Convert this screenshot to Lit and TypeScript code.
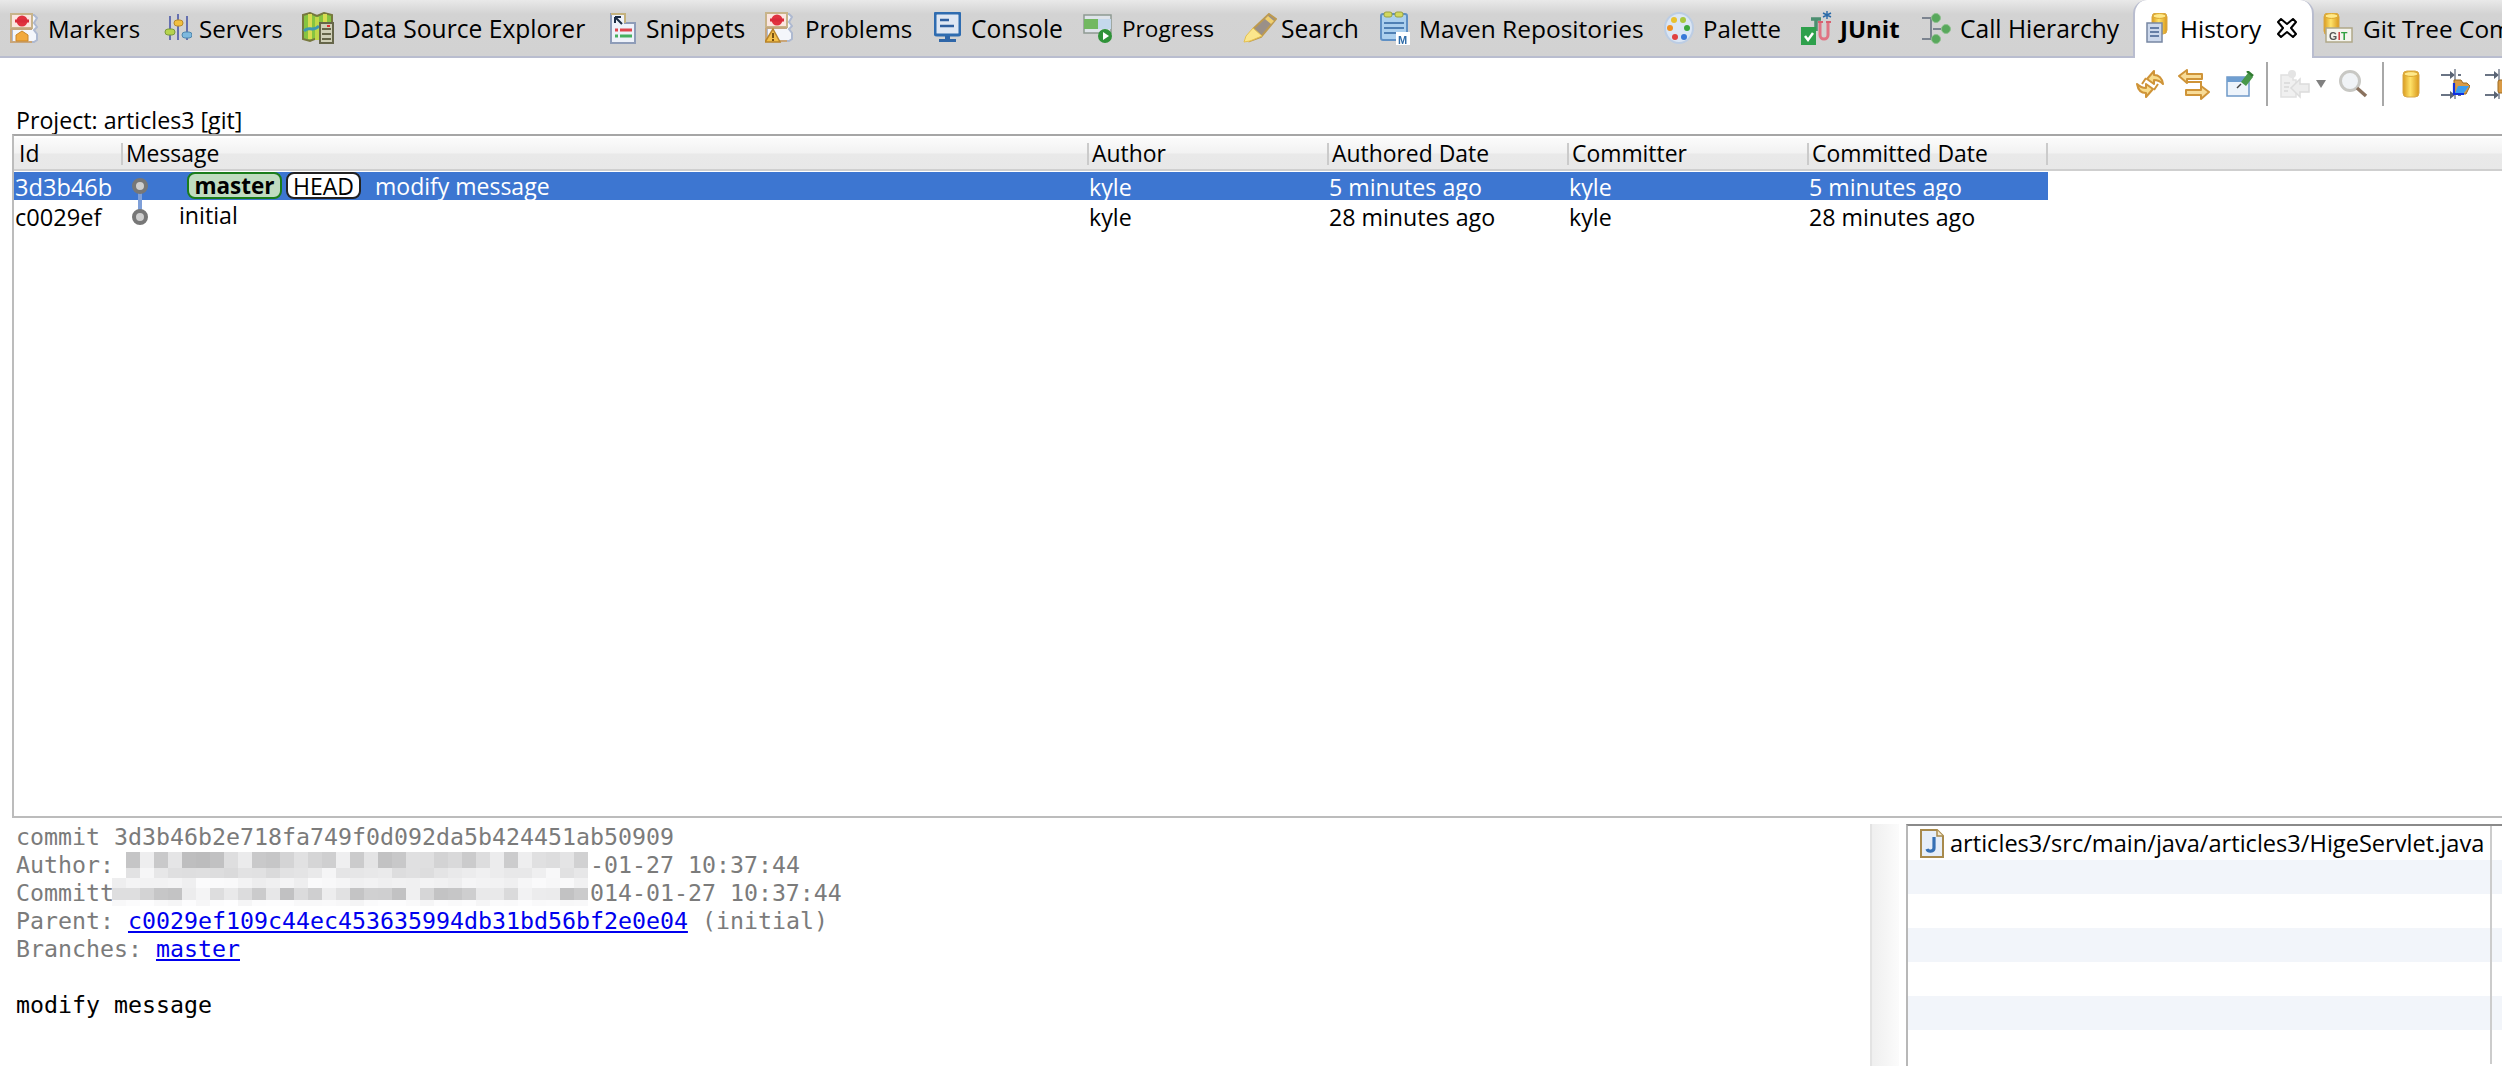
import { LitElement, html, css, svg } from "lit";
import { customElement } from "lit/decorators.js";

const cyl = (x: number, y: number, w: number, h: number) => svg`
  <defs><linearGradient id="cy${x}${y}" x1="0" x2="1" y1="0" y2="0"><stop offset="0" stop-color="#d99b1e"/><stop offset=".45" stop-color="#ffe36a"/><stop offset="1" stop-color="#d9981c"/></linearGradient></defs>
  <rect x=${x} y=${y} width=${w} height=${h} rx="4" fill="url(#cy${x}${y})" stroke="#d8a848" stroke-width="1"/>
  <ellipse cx=${x + w / 2} cy=${y + 3} rx=${w / 2 - 1} ry="2.4" fill="#ffe98a" stroke="#dba62e" stroke-width="1"/>`;

const sheetIcon = svg`
  <path d="M2 2h22l3 3-3 5 3 4-3 3 3 4v6l-3 2H2z" fill="#f4f6fb" stroke="#aeb9d0" stroke-width="2"/>
  <path d="M1 1h21v14H1z" fill="#fbe6e0" stroke="#c8b48a" stroke-width="2"/>
  <path d="M1 16h21" stroke="#c4a67e" stroke-width="2"/>
  <path d="M1 16v13h21" fill="none" stroke="#c9a67a" stroke-width="2"/>`;

const ICONS: Record<string, unknown> = {
  markers: html`<svg width="28" height="30" viewBox="0 0 28 30">${sheetIcon}
    <circle cx="12" cy="8" r="5.5" fill="#e0333f"/><rect x="5" y="6.5" width="14" height="3" fill="#d92b3a"/>
    <path d="M12 18l6 4v6H6v-6z" fill="#f2a93c" stroke="#c9862a"/></svg>`,
  servers: html`<svg width="28" height="30" viewBox="0 0 28 30">
    <path d="M6 3v24M14 1v26M23 3v24" stroke="#6570b0" stroke-width="2"/>
    <rect x="1" y="16" width="10" height="6" rx="3" fill="#b6d44e" stroke="#7a9a3a"/>
    <rect x="10" y="7" width="9" height="6" rx="3" fill="#f2bf3e" stroke="#b98a2a"/>
    <rect x="18" y="19" width="10" height="6" rx="3" fill="#7db8de" stroke="#4f86ad"/></svg>`,
  data: html`<svg width="32" height="32" viewBox="0 0 32 32">
    <path d="M1 3l7-2 7 3 7-3 8 2v24l-8 2-7-3-7 3-7-2z" fill="#86c440" stroke="#77783e" stroke-width="2"/>
    <path d="M8 2v25" stroke="#d8dc50" stroke-width="4"/><path d="M15 5v23" stroke="#c0d848" stroke-width="4"/><path d="M23 2v9" stroke="#d8dc50" stroke-width="4"/>
    <path d="M2 19c5-6 8 2 15-5" stroke="#3f98b0" stroke-width="3" fill="none"/>
    <rect x="18" y="11" width="13" height="20" fill="#d0d0b8" stroke="#66664a" stroke-width="2"/>
    <path d="M20 17h9M20 22h9M20 27h9" stroke="#66664a" stroke-width="2"/><rect x="25" y="13" width="3" height="2" fill="#d33"/></svg>`,
  snippets: html`<svg width="26" height="32" viewBox="0 0 26 32">
    <path d="M1 2h14v9h10v20H1z" fill="#eef2fa" stroke="#8e9cb8" stroke-width="2"/>
    <path d="M1 2h14v9" fill="none" stroke="#c4b27e" stroke-width="2"/>
    <path d="M12 12L5 5M5 5v6M5 5h6" stroke="#1c2d44" stroke-width="2" fill="none"/>
    <path d="M5 18h3M10 18h12" stroke="#e0454c" stroke-width="3"/><path d="M5 24h3M10 24h12" stroke="#46b060" stroke-width="3"/></svg>`,
  problems: html`<svg width="28" height="32" viewBox="0 0 28 32">${sheetIcon}
    <circle cx="12" cy="8" r="5.5" fill="#e0333f"/><rect x="5" y="6.5" width="14" height="3" fill="#d92b3a"/>
    <path d="M8 17l7 13H0z" fill="#f4c04a" stroke="#b8842a" stroke-width="1.5"/><path d="M8 21v5M8 27v2" stroke="#7a5312" stroke-width="2"/></svg>`,
  console: html`<svg width="27" height="32" viewBox="0 0 27 32">
    <rect x="1" y="1" width="25" height="22" rx="2" fill="#dfe7f3" stroke="#2f6cb0" stroke-width="3"/>
    <path d="M6 8h9M6 14h14" stroke="#2f5f9f" stroke-width="2.5"/>
    <path d="M11 24h5v3h-5zM5 27h17v3H5z" fill="#2f66a8"/></svg>`,
  progress: html`<svg width="30" height="32" viewBox="0 0 30 32">
    <rect x="1" y="3" width="27" height="18" fill="#dfe4ea" stroke="#8f9a92" stroke-width="1.5"/>
    <rect x="1" y="7" width="14" height="10" fill="#72b860"/><rect x="15" y="7" width="13" height="10" fill="#c4d8ec"/>
    <circle cx="22" cy="24" r="7" fill="#2f9238"/><path d="M20 20l6 4-6 4z" fill="#fff"/></svg>`,
  search: html`<svg width="35" height="30" viewBox="0 0 35 30">
    <path d="M27 1l7 5-15 18-11 4 3-12z" fill="#9a9088" stroke="#bd9a50" stroke-width="2"/>
    <path d="M26 3l6 5-3 3-6-5z" fill="#f0d070"/>
    <path d="M11 15l9 8-12 5-6 1 2-6z" fill="#fbe68c" stroke="#e4c050"/></svg>`,
  maven: html`<svg width="30" height="34" viewBox="0 0 30 34">
    <rect x="1" y="3" width="26" height="26" rx="2" fill="#acd0ee" stroke="#5f90c4" stroke-width="2"/>
    <rect x="4" y="1" width="8" height="5" rx="2" fill="#d2d860" stroke="#9aa040"/><rect x="15" y="1" width="8" height="5" rx="2" fill="#d2d860" stroke="#9aa040"/>
    <path d="M4 12h20M4 17h20M4 22h16" stroke="#4f80b4" stroke-width="2"/>
    <rect x="16" y="21" width="14" height="13" fill="#fff"/><text x="18" y="32.5" font-family="Liberation Sans, sans-serif" font-weight="700" font-size="11" fill="#2f6ca8">M</text></svg>`,
  palette: html`<svg width="30" height="32" viewBox="0 0 30 32">
    <ellipse cx="15" cy="16" rx="14" ry="15" fill="#dbe6f4" stroke="#bccde4" stroke-width="2"/>
    <circle cx="10" cy="8" r="3" fill="#e8c22e"/><circle cx="19" cy="8" r="3" fill="#a8c840"/>
    <circle cx="6" cy="16" r="3" fill="#f09020"/><circle cx="23" cy="16" r="3" fill="#3ca83c"/>
    <circle cx="11" cy="25" r="3" fill="#e04040"/><circle cx="20" cy="25" r="3" fill="#3878d8"/></svg>`,
  junit: html`<svg width="33" height="36" viewBox="0 0 33 36">
    <path d="M11 9h10M16 9v12" stroke="#4c8f70" stroke-width="3.5"/>
    <path d="M20 13v12a4 4 0 008 0V13" fill="none" stroke="#e07484" stroke-width="3"/><path d="M18 12h5M26 12h5" stroke="#d86070" stroke-width="2"/>
    <path d="M27 1v8M23 3l8 4M31 3l-8 4" stroke="#2a6aa8" stroke-width="1.4"/>
    <rect x="1" y="17" width="15" height="18" fill="#2ea04c"/><path d="M5 26l3 4 5-7" stroke="#fff" stroke-width="2.5" fill="none"/></svg>`,
  call: html`<svg width="32" height="32" viewBox="0 0 32 32">
    <path d="M1 6h8M1 27h8M12 17h8M12 6h-2v21h2" stroke="#7c8490" stroke-width="2" fill="none"/>
    <circle cx="15" cy="6" r="4.5" fill="#58a85c" stroke="#8ec08e"/><circle cx="15" cy="27" r="4.5" fill="#58a85c" stroke="#8ec08e"/><circle cx="25" cy="17" r="4.5" fill="#58a85c" stroke="#8ec08e"/></svg>`,
  history: html`<svg width="22" height="30" viewBox="0 0 22 30">${cyl(6, 0, 15, 21)}
    <rect x="1" y="10" width="15" height="19" fill="#ccd8ec" stroke="#7787a3" stroke-width="1.5"/>
    <path d="M4 15h9M4 19h9M4 23h9" stroke="#43608f" stroke-width="1.6"/></svg>`,
  git: html`<svg width="30" height="30" viewBox="0 0 30 30">${cyl(1, 0, 15, 22)}
    <rect x="3" y="15" width="26" height="14" fill="#f4f4ee" stroke="#b0a888" stroke-width="1.5"/>
    <text x="6" y="26.5" font-family="Liberation Sans, sans-serif" font-weight="700" font-size="10.5" letter-spacing=".5" fill="#555">G<tspan fill="#d04040">I</tspan><tspan fill="#30a040">T</tspan></text></svg>`,
  refresh: html`<svg width="28" height="30" viewBox="0 0 28 30">
    <path d="M11 10l7-8v4c5 0 8 3 9 9-3-3-5-4-9-4v4z" fill="#f8dc8c" stroke="#cf9438" stroke-width="2" stroke-linejoin="round"/>
    <path d="M17 20l-7 8v-4c-5 0-8-3-9-9 3 3 5 4 9 4v-4z" fill="#f8dc8c" stroke="#cf9438" stroke-width="2" stroke-linejoin="round"/>
    <path d="M10 9l-4 6M18 21l4-6" stroke="#cf9438" stroke-width="2"/></svg>`,
  compare: html`<svg width="32" height="31" viewBox="0 0 32 31">
    <path d="M1 7l8-6v4h15v5H9v4z" fill="#f8dc98" stroke="#cf9438" stroke-width="2" stroke-linejoin="round"/>
    <path d="M9 13h14v4" fill="none" stroke="#cf9438" stroke-width="2"/>
    <path d="M31 23l-8-6v4H8v5h15v4z" fill="#f8dc98" stroke="#cf9438" stroke-width="2" stroke-linejoin="round"/></svg>`,
  pin: html`<svg width="28" height="26" viewBox="0 0 28 26">
    <rect x="1" y="6" width="22" height="19" fill="#eef4fb" stroke="#6f99c8" stroke-width="1.5"/>
    <rect x="1" y="6" width="22" height="5" fill="#6f9ed0"/>
    <path d="M15 13l-4 4" stroke="#444" stroke-width="1.5"/>
    <path d="M15 11l7-9 5 4-7 9z" fill="#48984a"/><path d="M21 0l6 5" stroke="#2f7a30" stroke-width="2.5"/></svg>`,
  disabled: html`<svg width="30" height="30" viewBox="0 0 30 30">
    <path d="M1 6h12v5h3v17H1z" fill="#f0f0f0" stroke="#e0e0e0" stroke-width="1.5"/>
    <circle cx="12" cy="5" r="4" fill="#e4e4e4"/>
    <path d="M29 15H20V10l-9 9 9 9v-5h9z" fill="#ededed" stroke="#dcdcdc" stroke-width="1.5"/>
    <path d="M4 14h6M4 18h5M4 22h4" stroke="#d8d8d8" stroke-width="1.5"/></svg>`,
  magnifier: html`<svg width="29" height="28" viewBox="0 0 29 28">
    <circle cx="11" cy="11" r="9.5" fill="#f0f3f6" stroke="#c8c8c4" stroke-width="3"/>
    <path d="M18 18l9 8" stroke="#8a725e" stroke-width="3.5"/></svg>`,
  cylinder: html`<svg width="18" height="28" viewBox="0 0 18 28">${cyl(1, 1, 16, 26)}</svg>`,
  nav1: html`<svg width="30" height="30" viewBox="0 0 30 30">
    <path d="M1 6h10M1 26h10M18 6h3M18 26h3" stroke="#6a7484" stroke-width="2"/><path d="M10 2l5 4-5 4zM10 22l5 4-5 4z" fill="#5a6474"/>
    <path d="M15 0v30" stroke="#7a8290" stroke-width="1.5"/>
    <path d="M14 11h7l2 3h4l3 3-4 8H14z" fill="#d99a44" stroke="#9c6a20"/><path d="M15 24l3-7h11l-5 7z" fill="#3a9cf0"/><path d="M14 14v11h10" stroke="#1030e0" stroke-width="2.2" fill="none"/></svg>`,
  nav2: html`<svg width="30" height="30" viewBox="0 0 30 30">
    <path d="M1 6h10M1 26h10" stroke="#6a7484" stroke-width="2"/><path d="M10 2l5 4-5 4zM10 22l5 4-5 4z" fill="#5a6474"/>
    <path d="M15 0v30" stroke="#7a8290" stroke-width="1.5"/>
    <rect x="14" y="11" width="14" height="13" rx="2" fill="#d99a44" stroke="#9c6a20"/></svg>`,
  java: html`<svg width="24" height="29" viewBox="0 0 24 29">
    <path d="M1 1h16l6 6v21H1z" fill="#e6eef8" stroke="#a88a4c" stroke-width="2"/>
    <path d="M17 1v6h6" fill="#f4ead0" stroke="#a88a4c" stroke-width="1.5"/>
    <path d="M14 8v11c0 4-6 4-7 1" fill="none" stroke="#3670b4" stroke-width="3.2"/></svg>`,
};

interface Tab { label: string; icon: string; iw: number; w: number; bold?: boolean; gap: number; fs: number }

const TABS: Tab[] = [
  { label: "Markers", icon: "markers", iw: 28, w: 154, gap: 10, fs: 24 },
  { label: "Servers", icon: "servers", iw: 28, w: 138, gap: 7, fs: 24.2 },
  { label: "Data Source Explorer", icon: "data", iw: 32, w: 308, gap: 9, fs: 24.6 },
  { label: "Snippets", icon: "snippets", iw: 26, w: 155, gap: 10, fs: 24.6 },
  { label: "Problems", icon: "problems", iw: 28, w: 169, gap: 12, fs: 24.2 },
  { label: "Console", icon: "console", iw: 27, w: 149, gap: 10, fs: 24.6 },
  { label: "Progress", icon: "progress", iw: 30, w: 159, gap: 9, fs: 22.6 },
  { label: "Search", icon: "search", iw: 35, w: 138, gap: 4, fs: 24.6 },
  { label: "Maven Repositories", icon: "maven", iw: 30, w: 284, gap: 9, fs: 24.5 },
  { label: "Palette", icon: "palette", iw: 30, w: 136, gap: 9, fs: 24 },
  { label: "JUnit", icon: "junit", iw: 33, w: 121, gap: 7, bold: true, fs: 24 },
  { label: "Call Hierarchy", icon: "call", iw: 32, w: 212, gap: 7, fs: 24.6 },
];

const TOOLS: { icon?: string; sep?: boolean; tri?: boolean; ml: number }[] = [
  { icon: "refresh", ml: 0 },
  { icon: "compare", ml: 14 },
  { icon: "pin", ml: 16 },
  { sep: true, ml: 12 },
  { icon: "disabled", ml: 12 },
  { tri: true, ml: 6 },
  { icon: "magnifier", ml: 13 },
  { sep: true, ml: 14 },
  { icon: "cylinder", ml: 18 },
  { icon: "nav1", ml: 20 },
  { icon: "nav2", ml: 14 },
];

const COLS = ["Id", "Message", "Author", "Authored Date", "Committer", "Committed Date", ""];

// Pixelated smear that hides the name and e-mail address in the commit details.
const MOSAIC_ROWS = [
  { base: 208, spread: 44 },
  { base: 230, spread: 26 },
  { base: 243, spread: 12 },
  { base: 214, spread: 44 },
  { base: 248, spread: 8 },
];
const mosaicColor = (r: number, c: number) => {
  const n = Math.abs(Math.sin(r * 12.9898 + c * 78.233) * 43758.5453) % 1;
  const row = MOSAIC_ROWS[r];
  const v = Math.min(255, Math.round(row.base + (n - 0.4) * row.spread * 1.2));
  return `rgb(${v},${v},${Math.min(255, v + 1)})`;
};

@customElement("app-root")
export class AppRoot extends LitElement {
  static styles = css`
    :host {
      display: flex;
      flex-direction: column;
      width: 2502px;
      height: 1066px;
      overflow: hidden;
      background: #fff;
      color: #000;
      font-family: "Open Sans", "Noto Sans", sans-serif;
      font-size: 23.2px;
    }
    .tabs {
      display: flex;
      flex: none;
      height: 58px;
      box-sizing: border-box;
      border-bottom: 2px solid #b9bdcf;
      padding-left: 10px;
      background: linear-gradient(#e9e9e9 0, #d3d3d3 14px, #d2d2d2 100%);
    }
    .tab {
      display: flex;
      flex: none;
      align-items: center;
      height: 56px;
      white-space: nowrap;
      font-size: 24.4px;
    }
    .tabs svg, .toolbar svg, .li svg { display: block; flex: none; filter: blur(0.35px); }
    .close svg { filter: none; }
    .ic { display: flex; flex: none; }
    .bold { font-weight: 700; }
    .active {
      height: 58px;
      margin-bottom: -2px;
      box-sizing: border-box;
      width: 181px;
      margin-right: 9px;
      padding: 0 0 2px 11px;
      background: #fff;
      border: 2px solid #b9bdcf;
      border-width: 0 2px;
      border-radius: 14px 14px 0 0;
    }
    .active .lbl { margin-left: 12px; }
    .close { margin-left: 16px; display: flex; }
    .git .lbl { margin-left: 10px; }
    .toolbar {
      flex: none;
      display: flex;
      align-items: center;
      justify-content: flex-end;
      height: 52px;
      margin-right: -12px;
    }
    .tsep { width: 2px; height: 44px; background: #a8a8a8; }
    .tri { width: 0; height: 0; border: 5px solid transparent; border-top: 8px solid #808080; border-bottom: 0; }
    .project { flex: none; height: 24px; line-height: 20px; padding-left: 16px; }
    .table {
      flex: 1;
      min-height: 0;
      border-top: 2px solid #a6a6a6;
      border-left: 2px solid #bcbcbc;
      border-bottom: 2px solid #bcbcbc;
      margin-left: 12px;
    }
    .head, .row {
      display: grid;
      grid-template-columns: 107px 966px 240px 240px 240px 239px 1fr;
    }
    .head {
      height: 31px;
      margin-top: 2px;
      border-bottom: 2px solid #cfcfcf;
      font-size: 22.9px;
      background: linear-gradient(#fbfbfb 0, #f2f2f2 15px, #e9e9e9 16px, #e8e8e8 100%);
    }
    .hc { display: flex; align-items: center; min-width: 0; padding-bottom: 1px; }
    .sep { width: 2px; height: 22px; background: #cbcbcb; margin-right: 3px; flex: none; }
    .first { padding-left: 5px; }
    .row { height: 28px; line-height: 31px; width: 2034px; }
    .row.sel { background: #3d76d1; color: #fff; margin-top: 1px; }
    .row.plain { line-height: 34px; }
    .c { padding-left: 2px; white-space: nowrap; min-width: 0; }
    .c.id { padding-left: 1px; font-size: 23.6px; }
    .msg { position: relative; display: flex; align-items: center; line-height: 24px; padding: 0 0 1px; box-sizing: border-box; height: 28px; }
    .plain .msg { padding: 2px 0 0; }
    .graph { position: absolute; left: 0; top: 0; overflow: visible; }
    .badge {
      height: 27px;
      box-sizing: border-box;
      border-radius: 8px;
      border: 2px solid;
      line-height: 22px;
      display: flex;
      align-items: center;
      justify-content: center;
      color: #000;
      flex: none;
    }
    .master { margin-left: 66px; width: 95px; background: #c0dcc0; border-color: #1a7d1a; font-weight: 700; font-size: 22.5px; }
    .headb { margin-left: 4px; width: 75px; background: #fff; border-color: #222; font-size: 23px; }
    .mtext { margin-left: 14px; font-size: 23px; }
    .itext { margin-left: 58px; }
    .bottom { flex: none; height: 248px; display: flex; }
    .details {
      position: relative;
      flex: none;
      width: 1870px;
      padding: 5px 0 0 16px;
      box-sizing: border-box;
      font: 23.25px/28px "DejaVu Sans Mono", monospace;
      color: #7b7b7b;
    }
    .ln { height: 28px; white-space: pre; }
    .details a { color: #0000ee; text-decoration: underline; }
    .details .body { color: #000; }
    .mosaic {
      position: absolute;
      left: 112px;
      top: 34px;
      display: grid;
      grid-template-columns: repeat(34, 14px);
      grid-template-rows: 16px 10px 10px 12px 6px;
      filter: blur(0.4px);
    }
    .sash {
      flex: none;
      width: 29px;
      margin-top: 6px;
      box-sizing: border-box;
      border-left: 2px solid #e3e3e3;
      background: linear-gradient(90deg, #efefef, #fbfbfb);
    }
    .list {
      flex: none;
      margin: 6px 0 0 7px;
      width: 596px;
      box-sizing: border-box;
      border-top: 2px solid #8a8a8a;
      border-left: 2px solid #b8b8b8;
      display: flex;
      flex-direction: column;
      overflow: hidden;
    }
    .li {
      flex: none;
      height: 34px;
      width: 594px;
      box-sizing: border-box;
      display: flex;
      align-items: center;
      white-space: nowrap;
      font-size: 23.6px;
      background: linear-gradient(90deg, transparent 582px, #ccc 582px, #ccc 584px, transparent 584px);
    }
    .li.alt { background: linear-gradient(90deg, #f2f5fa 582px, #ccc 582px, #ccc 584px, #f2f5fa 584px); }
    .li svg { margin-left: 12px; margin-right: 6px; }
  `;

  private tab(t: Tab) {
    return html`<div class="tab" style="width:${t.w}px">
      <span class="ic" style="width:${t.iw}px">${ICONS[t.icon]}</span>
      <span class="lbl ${t.bold ? "bold" : ""}" style="margin-left:${t.gap}px;font-size:${t.fs}px">${t.label}</span>
    </div>`;
  }

  render() {
    const mosaic = [];
    for (let r = 0; r < 5; r++) {
      for (let c = 0; c < 34; c++) {
        const skip = r < 2 && c < 1;
        mosaic.push(html`<i style="background:${skip ? "transparent" : mosaicColor(r, c)}"></i>`);
      }
    }
    return html`
      <div class="tabs">
        ${TABS.map((t) => this.tab(t))}
        <div class="tab active">
          <span class="ic">${ICONS.history}</span>
          <span class="lbl">History</span>
          <span class="close"><svg width="20" height="20" viewBox="0 0 20 20"><path d="M1 4l3-3 6 5 6-5 3 3-5 6 5 6-3 3-6-5-6 5-3-3 5-6z" fill="#fff" stroke="#000" stroke-width="2" stroke-linejoin="round"/></svg></span>
        </div>
        <div class="tab git"><span class="ic">${ICONS.git}</span><span class="lbl">Git Tree Compare</span></div>
      </div>
      <div class="toolbar">
        ${TOOLS.map((t) =>
          t.sep
            ? html`<span class="tsep" style="margin-left:${t.ml}px"></span>`
            : t.tri
              ? html`<span class="tri" style="margin-left:${t.ml}px"></span>`
              : html`<span style="margin-left:${t.ml}px">${ICONS[t.icon!]}</span>`
        )}
      </div>
      <div class="project">Project: articles3 [git]</div>
      <div class="table">
        <div class="head">
          ${COLS.map(
            (c, i) => html`<div class="hc ${i === 0 ? "first" : ""}">${i > 0 ? html`<span class="sep"></span>` : ""}${c}</div>`
          )}
        </div>
        <div class="row sel">
          <div class="c id">3d3b46b</div>
          <div class="c msg">
            <svg class="graph" width="40" height="28">
              <path d="M19 14v31" stroke="#7e9fd8" stroke-width="4"/>
              <circle cx="19" cy="14" r="6" fill="#cfcfcf" stroke="#777" stroke-width="4"/>
            </svg>
            <span class="badge master">master</span><span class="badge headb">HEAD</span><span class="mtext">modify message</span>
          </div>
          <div class="c">kyle</div>
          <div class="c">5 minutes ago</div>
          <div class="c">kyle</div>
          <div class="c">5 minutes ago</div>
          <div></div>
        </div>
        <div class="row plain">
          <div class="c id">c0029ef</div>
          <div class="c msg">
            <svg class="graph" width="40" height="28"><circle cx="19" cy="17" r="6" fill="#cfcfcf" stroke="#777" stroke-width="4"/></svg>
            <span class="itext">initial</span>
          </div>
          <div class="c">kyle</div>
          <div class="c">28 minutes ago</div>
          <div class="c">kyle</div>
          <div class="c">28 minutes ago</div>
          <div></div>
        </div>
      </div>
      <div class="bottom">
        <div class="details">
          <div class="ln">commit 3d3b46b2e718fa749f0d092da5b424451ab50909</div>
          <div class="ln">Author: ${" ".repeat(33)}-01-27 10:37:44</div>
          <div class="ln">Committ${" ".repeat(34)}014-01-27 10:37:44</div>
          <div class="ln">Parent: <a>c0029ef109c44ec453635994db31bd56bf2e0e04</a> (initial)</div>
          <div class="ln">Branches: <a>master</a></div>
          <div class="ln"></div>
          <div class="ln body">modify message</div>
          <div class="mosaic">${mosaic}</div>
        </div>
        <div class="sash"></div>
        <div class="list">
          <div class="li">${ICONS.java}<span>articles3/src/main/java/articles3/HigeServlet.java</span></div>
          ${[1, 0, 1, 0, 1, 0].map((a) => html`<div class="li ${a ? "alt" : ""}"></div>`)}
        </div>
      </div>
    `;
  }
}
